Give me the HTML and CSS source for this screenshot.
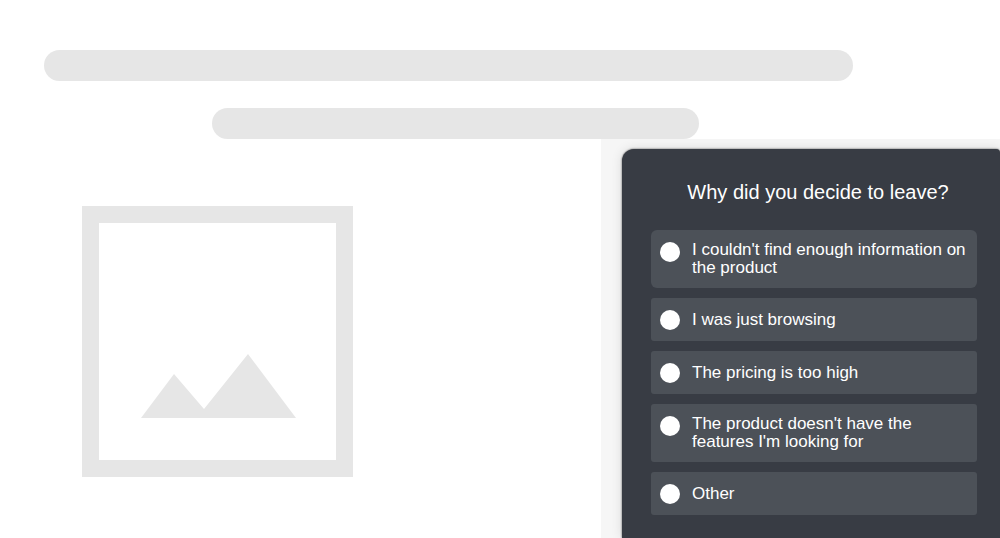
FILE: index.html
```html
<!DOCTYPE html>
<html lang="en">
  <head>
    <meta charset="UTF-8" />
    <meta name="viewport" content="width=device-width, initial-scale=1.0" />
    <title>Exit Survey</title>
    <link rel="stylesheet" href="styles.css">
  </head>
  <body>
    <header class="heading">
      <div class="line line-long"></div>
      <div class="line line-short"></div>
    </header>
    <main class="content">
      <div class="picture">
        <svg class="mountains" viewBox="0 0 155 64" aria-hidden="true">
          <path d="M0 64 L33 20 L63 55 L107 0 L155 64 Z" fill="#e6e6e6" />
        </svg>
      </div>
      <div class="survey-area">
        <form class="survey">
          <fieldset class="options">
            <legend class="question">Why did you decide to leave?</legend>
            <label class="option option-first">
              <input type="radio" name="reason" value="information" />
              <span>I couldn't find enough information on the product</span>
            </label>
            <label class="option">
              <input type="radio" name="reason" value="browsing" />
              <span>I was just browsing</span>
            </label>
            <label class="option">
              <input type="radio" name="reason" value="pricing" />
              <span>The pricing is too high</span>
            </label>
            <label class="option">
              <input type="radio" name="reason" value="features" />
              <span>The product doesn't have the features I'm looking for</span>
            </label>
            <label class="option">
              <input type="radio" name="reason" value="other" />
              <span>Other</span>
            </label>
          </fieldset>
        </form>
      </div>
    </main>
  </body>
</html>
```

FILE: styles.css
```css
* {
  box-sizing: border-box;
}

body {
  font-family: "Liberation Sans", Arial, sans-serif;
  margin: 0;
  background-color: #fff;
}

/* Placeholder page */
.heading {
  display: flex;
  flex-direction: column;
  gap: 27px;
  padding-top: 50px;
}

.line {
  height: 31px;
  border-radius: 16px;
  background-color: #e6e6e6;
}

.line-long {
  margin: 0 14.7% 0 4.4%;
}

.line-short {
  margin: 0 30.1% 0 21.2%;
}

.content {
  display: flex;
  justify-content: space-between;
  align-items: flex-start;
  padding-left: 82px;
}

.picture {
  display: flex;
  align-items: flex-end;
  width: 271px;
  aspect-ratio: 1;
  margin-top: 67px;
  padding: 0 40px 42px 42px;
  border: 17px solid #e6e6e6;
}

.mountains {
  display: block;
  width: 100%;
}

/* Survey */
.survey-area {
  width: 399px;
  padding: 10px 0 0 21px;
  background-color: #f6f6f6;
  overflow: hidden;
}

.survey {
  padding: 31px 23px 23px 29px;
  border-radius: 12px 4px 0 0;
  background-color: #383c44;
  box-shadow: 0 0 2px rgba(0, 0, 0, 0.7), 0 0 12px rgba(0, 0, 0, 0.12);
  color: #fff;
}

.options {
  display: flex;
  flex-direction: column;
  gap: 10px;
  min-width: 0;
  margin: 0;
  padding: 0;
  border: 0;
}

.question {
  width: 100%;
  margin-bottom: 26px;
  padding: 0 0 0 8px;
  font-size: 20px;
  line-height: 24px;
  text-align: center;
}

.option {
  display: flex;
  align-items: flex-start;
  gap: 12px;
  padding: 11px 9px;
  border-radius: 3px;
  background-color: #4c5158;
  font-size: 17px;
  line-height: 18px;
  cursor: pointer;
}

.option-first {
  border-radius: 6px;
}

.option span {
  align-self: center;
}

.option input {
  appearance: none;
  flex: none;
  width: 20px;
  height: 20px;
  margin: 1px 0 0;
  border-radius: 50%;
  background-color: #fff;
  cursor: pointer;
}

.option input:checked {
  border: 6px solid #fff;
  background-color: #383c44;
}
```
